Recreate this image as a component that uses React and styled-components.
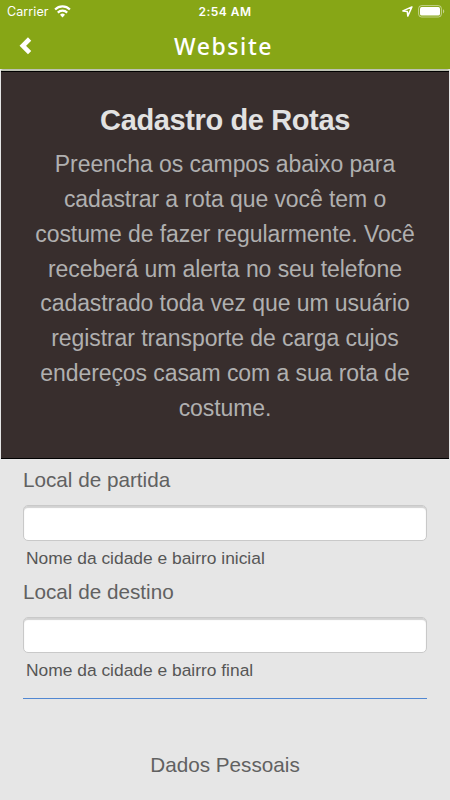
import React from "react";
import styled, { createGlobalStyle } from "styled-components";

const GlobalStyle = createGlobalStyle`
  *, *::before, *::after { box-sizing: border-box; }
  body { margin: 0; background: #e6e6e6; }
`;

const Screen = styled.main`
  width: 450px;
  height: 800px;
  overflow: hidden;
  background: #e6e6e6;
  color: #616161;
  font-family: "Liberation Sans", Arial, sans-serif;
`;

const Header = styled.header`
  height: 69px;
  background: #87a616;
  color: #fff;
`;

const StatusBar = styled.div`
  height: 23px;
  display: grid;
  grid-template-columns: 1fr auto 1fr;
  align-items: center;
  padding: 0 5px 0 7px;
  font-family: Inter, sans-serif;
  font-size: 12.5px;
  line-height: 23px;
`;

const StatusGroup = styled.div`
  display: flex;
  align-items: center;
  justify-content: ${(p) => (p.$end ? "flex-end" : "flex-start")};
  gap: 5px;
`;

const Carrier = styled.span`
  letter-spacing: 0.1px;
`;

const Clock = styled.time`
  margin-right: 2px;
  font-weight: 600;
  font-size: 12px;
  letter-spacing: 0.5px;
`;

const NavBar = styled.nav`
  height: 46px;
  display: grid;
  grid-template-columns: 50px 1fr 54px;
  align-items: center;
`;

const BackButton = styled.button`
  height: 46px;
  border: 0;
  padding: 0 0 0 19px;
  background: none;
  color: inherit;
  display: flex;
  align-items: center;
`;

const PageTitle = styled.h1`
  margin: 0;
  text-align: center;
  font: 500 23px/46px "Noto Sans", sans-serif;
  letter-spacing: 1.6px;
  text-indent: 1px;
`;

const Hero = styled.section`
  height: 390px;
  margin: 0 1px;
  border-top: 2px solid #bcc1b2;
  border-bottom: 1px solid #000;
  border-radius: 2px 2px 0 0;
  background: #382e2d;
  box-shadow: inset 0 1px #000;
  text-align: center;
`;

const HeroTitle = styled.h2`
  margin: 0;
  padding-top: 32px;
  color: #e2e2e2;
  font-size: 29px;
  line-height: 34px;
  letter-spacing: -0.38px;
`;

const HeroText = styled.p`
  margin: 10px 0 0;
  color: #b0b0b0;
  font-size: 23px;
  line-height: 34.85px;
  letter-spacing: -0.08px;
`;

const Line = styled.span`
  display: block;
  white-space: nowrap;
`;

const Form = styled.form`
  padding: 1px 23px 0;
`;

const Field = styled.div`
  height: 112px;
`;

const Label = styled.label`
  display: block;
  padding-top: 6px;
  font-size: 20.7px;
  line-height: 28px;
`;

const Input = styled.input`
  display: block;
  width: 404px;
  height: 36px;
  margin: 11px 0 0;
  border: 1px solid #c9c9c9;
  border-radius: 5px;
  background: #fff;
  box-shadow: inset 0 2px 1px #d2d2d2;
`;

const Hint = styled.small`
  display: block;
  padding: 7px 0 0 3px;
  color: #565656;
  font-size: 17.4px;
  line-height: 20px;
`;

const Divider = styled.hr`
  height: 1px;
  margin: 14px 0 0;
  border: 0;
  background: #5288d2;
`;

const SectionTitle = styled.h3`
  margin: 52px 0 0;
  text-align: center;
  font-weight: 400;
  font-size: 20.7px;
  line-height: 28px;
`;

const heroLines = [
  "Preencha os campos abaixo para",
  "cadastrar a rota que você tem o",
  "costume de fazer regularmente. Você",
  "receberá um alerta no seu telefone",
  "cadastrado toda vez que um usuário",
  "registrar transporte de carga cujos",
  "endereços casam com a sua rota de",
  "costume.",
];

const fields = [
  { id: "origin", label: "Local de partida", hint: "Nome da cidade e bairro inicial" },
  { id: "destination", label: "Local de destino", hint: "Nome da cidade e bairro final" },
];

const WifiIcon = () => (
  <svg width="17" height="13" viewBox="0 0 17 13" fill="none" stroke="#fff" strokeWidth="2.2">
    <path d="M1.1 4.5a10.5 10.5 0 0 1 14.8 0" />
    <path d="M3.8 7.6a6.7 6.7 0 0 1 9.4 0" />
    <path d="M8.5 12.4 6 9.8a3.6 3.6 0 0 1 5 0Z" fill="#fff" stroke="none" />
  </svg>
);

const LocationIcon = () => (
  <svg width="11" height="11" viewBox="0 0 11 11" fill="none" stroke="#fff" strokeWidth="1.5" strokeLinejoin="round">
    <path d="M9.9.9.9 4.9l4.4.6.5 4.6Z" />
  </svg>
);

const BatteryIcon = () => (
  <svg width="27" height="13" viewBox="0 0 27 13">
    <rect x=".6" y=".6" width="22.8" height="11.4" rx="3" fill="none" stroke="#fff" strokeOpacity=".5" />
    <rect x="2" y="2" width="20" height="8.6" rx="1.7" fill="#fff" />
    <path d="M25 4.2c1.7.7 1.7 3.5 0 4.2Z" fill="#fff" fillOpacity=".5" />
  </svg>
);

const ChevronIcon = () => (
  <svg width="14" height="18" viewBox="0 0 14 18" fill="none" stroke="#fff" strokeWidth="4.6">
    <path d="M10.6 2 3.8 8.8l6.8 6.8" />
  </svg>
);

export default function App() {
  return (
    <Screen>
      <GlobalStyle />
      <Header>
        <StatusBar>
          <StatusGroup>
            <Carrier>Carrier</Carrier>
            <WifiIcon />
          </StatusGroup>
          <Clock>2:54 AM</Clock>
          <StatusGroup $end>
            <LocationIcon />
            <BatteryIcon />
          </StatusGroup>
        </StatusBar>
        <NavBar>
          <BackButton type="button" aria-label="Voltar">
            <ChevronIcon />
          </BackButton>
          <PageTitle>Website</PageTitle>
        </NavBar>
      </Header>
      <Hero>
        <HeroTitle>Cadastro de Rotas</HeroTitle>
        <HeroText>
          {heroLines.map((line) => (
            <Line key={line}>{line}</Line>
          ))}
        </HeroText>
      </Hero>
      <Form>
        {fields.map((field) => (
          <Field key={field.id}>
            <Label htmlFor={field.id}>{field.label}</Label>
            <Input id={field.id} type="text" />
            <Hint>{field.hint}</Hint>
          </Field>
        ))}
        <Divider />
        <SectionTitle>Dados Pessoais</SectionTitle>
      </Form>
    </Screen>
  );
}
